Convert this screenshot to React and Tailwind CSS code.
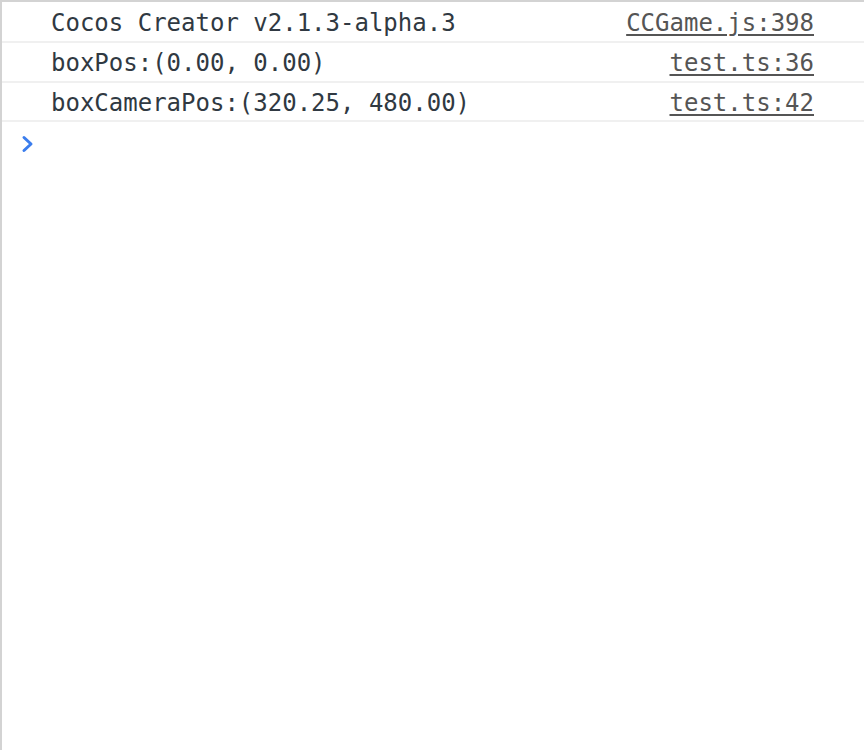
const logs = [
	{ text: "Cocos Creator v2.1.3-alpha.3", src: "CCGame.js:398", h: "h-[41px]" },
	{ text: "boxPos:(0.00, 0.00)", src: "test.ts:36", h: "h-[40px]" },
	{ text: "boxCameraPos:(320.25, 480.00)", src: "test.ts:42", h: "h-[39px]" },
];

export default function App() {
	return (
		<div className="w-[864px] h-[750px] bg-white border-t-2 border-l-2 border-[#d3d3d3] overflow-hidden font-['DejaVu_Sans_Mono',monospace] text-[24px]">
			{/* Console messages */}
			{logs.map((log) => (
				<div
					key={log.src}
					className={`${log.h} flex items-center justify-between pt-[2px] pl-[49px] pr-[50px] border-b-2 border-[#f0f0f0] text-[#303942]`}
				>
					<span className="whitespace-pre">{log.text}</span>
					<span className="text-[#555] underline underline-offset-[3px]">{log.src}</span>
				</div>
			))}
			{/* Prompt */}
			<div className="h-[44px] flex items-center pl-[19px]">
				<svg width="14" height="18" viewBox="0 0 14 18">
					<polyline
						points="3,2.5 10,9 3,15.5"
						fill="none"
						stroke="#3b7ded"
						strokeWidth="3"
						strokeLinecap="round"
						strokeLinejoin="round"
					/>
				</svg>
			</div>
		</div>
	);
}
